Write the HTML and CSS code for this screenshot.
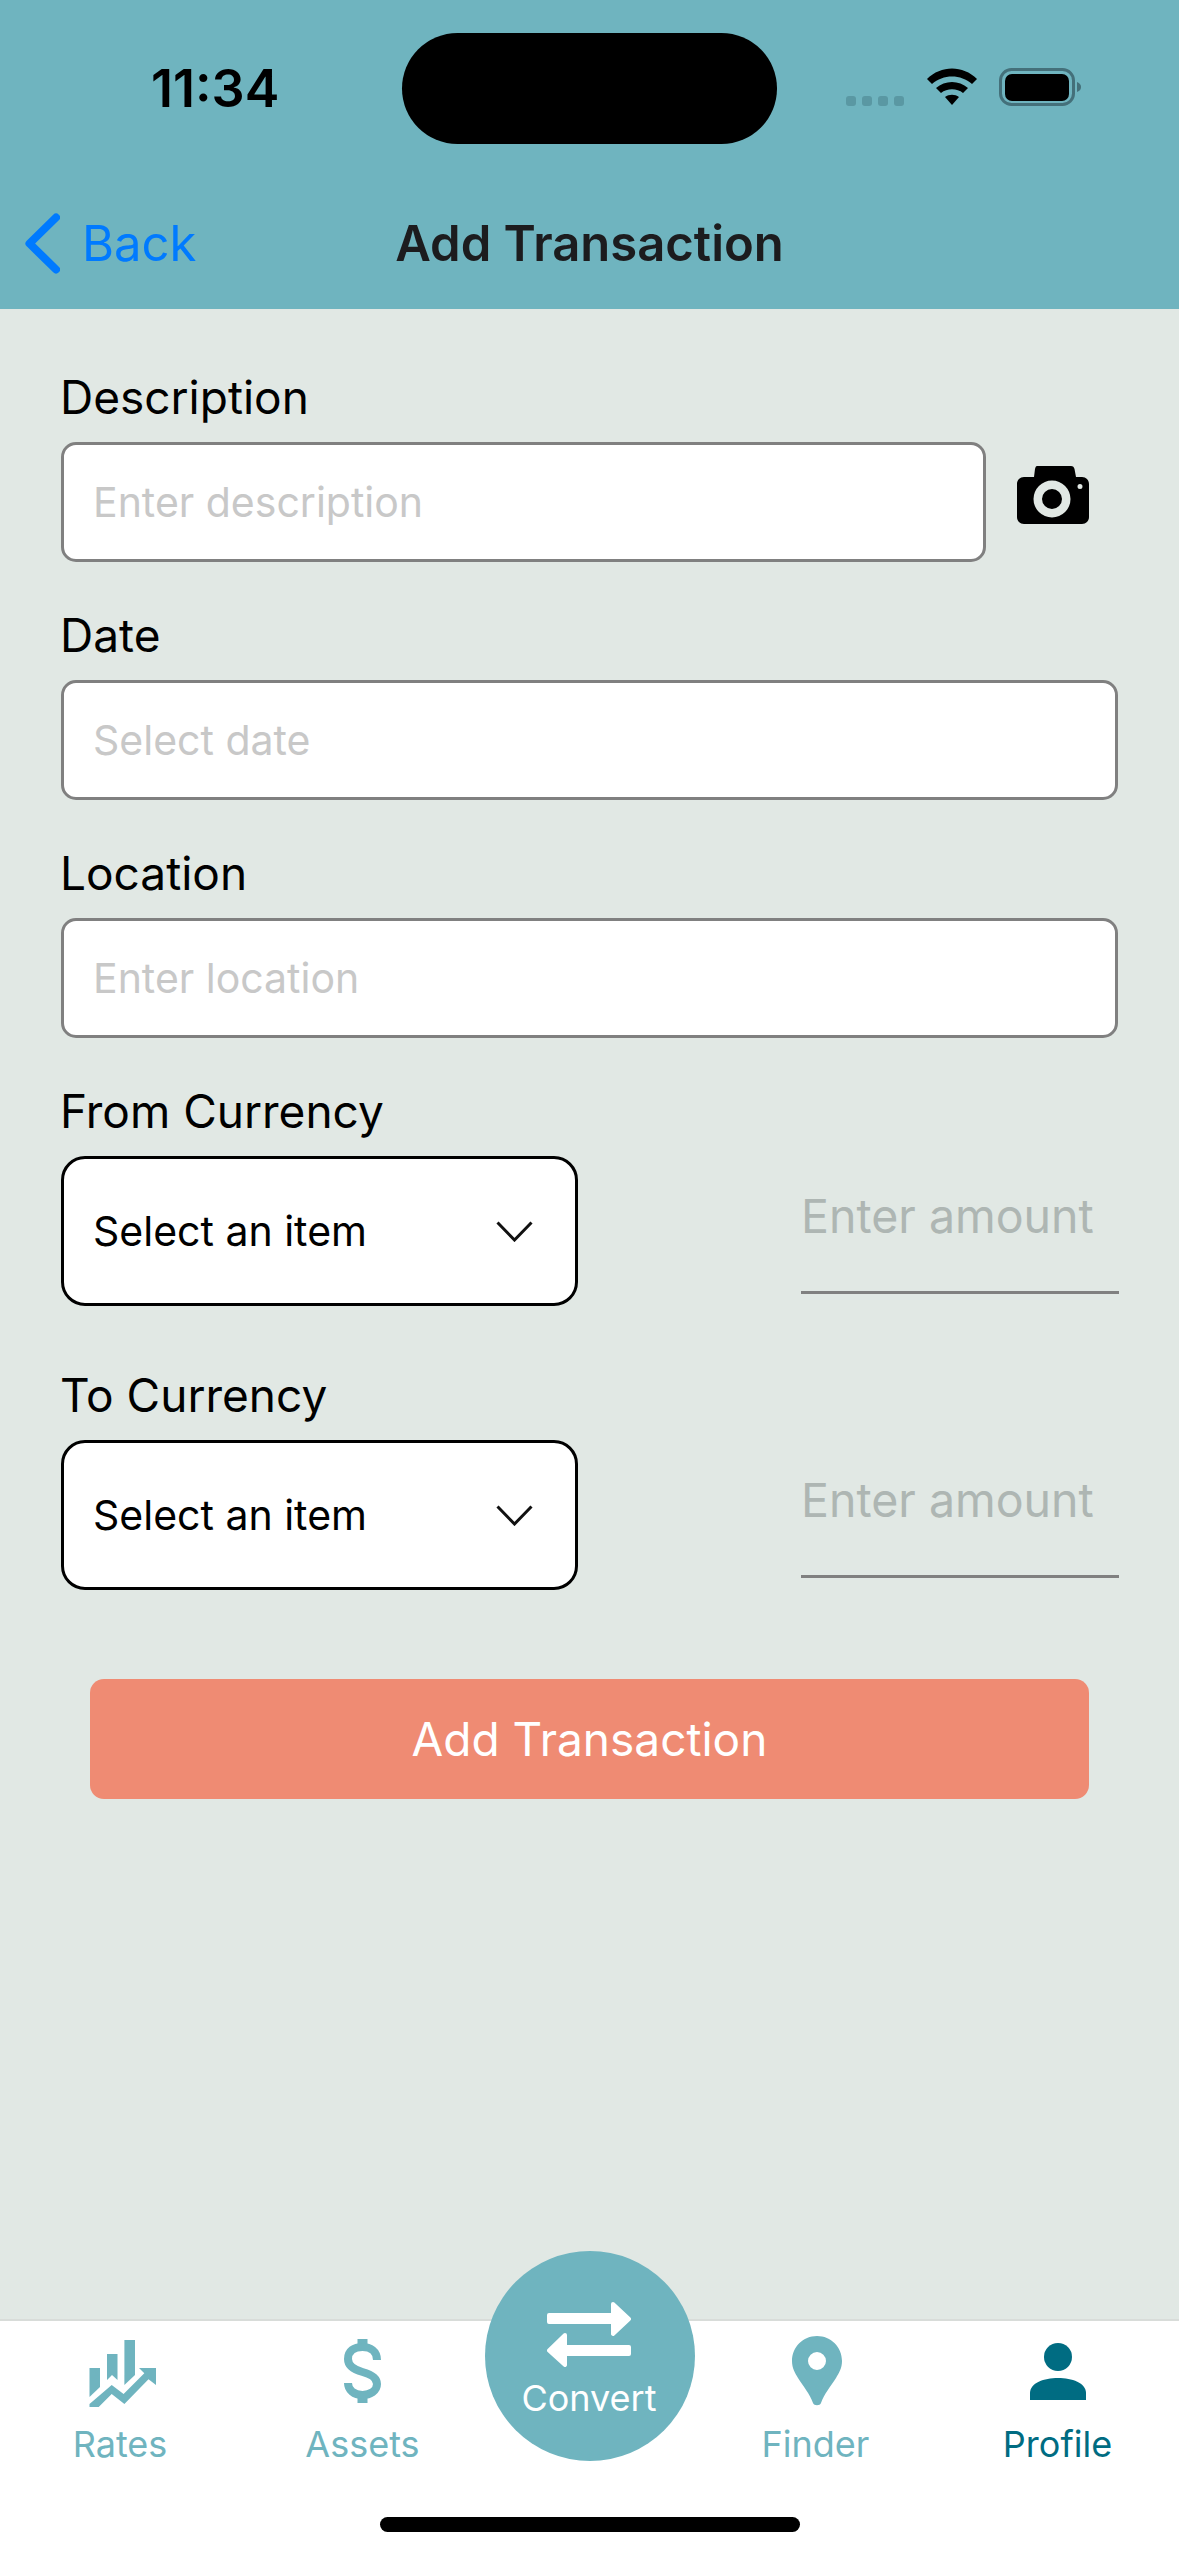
FILE: index.html
```html
<!DOCTYPE html>
<html lang="en">

<head>
    <meta charset="UTF-8">
    <meta name="viewport" content="width=device-width, initial-scale=1.0">
    <title>Add Transaction</title>
    <link rel="stylesheet" href="styles.css">
</head>

<body>
    <div class="screen">
        <header class="header">
            <div class="status">
                <span class="time">11:34</span>
                <div class="island"></div>
                <svg class="status-icons" width="235" height="38" viewBox="0 0 235 38">
                    <g fill="#5a98a3">
                        <rect x="0" y="28" width="10" height="10" rx="3"/>
                        <rect x="16" y="28" width="10" height="10" rx="3"/>
                        <rect x="32" y="28" width="10" height="10" rx="3"/>
                        <rect x="48" y="28" width="10" height="10" rx="3"/>
                    </g>
                    <path d="M81 11 C95 -3 117 -3 131 11 L126 16 C115 6 97 6 86 16 Z M90 20 C99 12 113 12 122 20 L117 25 C111 20 101 20 95 25 Z M99 29 C103 26 109 26 113 29 L106 37 Z"/>
                    <rect x="154.500" y="1.500" width="73" height="35" rx="11" fill="none" stroke="#44707a" stroke-width="3"/>
                    <rect x="159" y="6" width="64" height="27" rx="7"/>
                    <path d="M231 14 C234 15 235 17 235 19 C235 21 234 23 231 24 Z" fill="#44707a"/>
                </svg>
            </div>
            <nav class="nav">
                <a class="back">
                    <svg width="35" height="61" viewBox="0 0 35 61">
                        <path d="M31 4.500 L4.500 30.500 L31 56.500" fill="none" stroke="#007aff" stroke-width="8" stroke-linecap="round" stroke-linejoin="round"/>
                    </svg>
                    <span>Back</span>
                </a>
                <h1 class="title">Add Transaction</h1>
            </nav>
        </header>

        <main class="form">
            <label class="label">Description</label>
            <div class="desc-row">
                <input class="input" type="text" placeholder="Enter description">
                <svg class="camera" width="72" height="58" viewBox="0 0 72 58">
                    <path fill-rule="evenodd" d="M20 0 H54 C56 0 57 1 57.500 3 L59 11 H65 C69 11 72 14 72 18 V51 C72 55 69 58 65 58 H7 C3 58 0 55 0 51 V18 C0 14 3 11 7 11 H17 L18 3 C18.500 1 19 0 20 0 Z M35 14.500 A18.500 18.500 0 1 0 35 51.500 A18.500 18.500 0 1 0 35 14.500 Z M35 23 A10 10 0 1 1 35 43 A10 10 0 1 1 35 23 Z M63 18 A2.500 2.500 0 1 0 63 23 A2.500 2.500 0 1 0 63 18 Z"/>
                </svg>
            </div>

            <label class="label">Date</label>
            <input class="input" type="text" placeholder="Select date">

            <label class="label">Location</label>
            <input class="input" type="text" placeholder="Enter location">

            <label class="label">From Currency</label>
            <div class="currency-row">
                <div class="select">
                    <span>Select an item</span>
                    <svg width="37" height="21" viewBox="0 0 37 21">
                        <path d="M1.500 1.500 L18.500 19 L35.500 1.500" fill="none" stroke="#111" stroke-width="3"/>
                    </svg>
                </div>
                <input class="amount" type="text" placeholder="Enter amount">
            </div>

            <label class="label">To Currency</label>
            <div class="currency-row">
                <div class="select">
                    <span>Select an item</span>
                    <svg width="37" height="21" viewBox="0 0 37 21">
                        <path d="M1.500 1.500 L18.500 19 L35.500 1.500" fill="none" stroke="#111" stroke-width="3"/>
                    </svg>
                </div>
                <input class="amount" type="text" placeholder="Enter amount">
            </div>

            <button class="submit">Add Transaction</button>
        </main>

        <footer class="tabbar">
            <div class="tabs">
                <div class="tab">
                    <svg width="80" height="80" viewBox="0 0 80 80" fill="#6fb4bf">
                        <path d="M9.500 37 H20 V56 L9.500 66 Z"/>
                        <path d="M27 23 H37.500 V49 L32 44 L27 49 Z"/>
                        <path d="M44.400 9 H55 V44 L44.400 54 Z"/>
                        <path d="M9.500 73 L31.700 54 L43.600 63 L64.300 42.300 L59 37 H76 V54 L68.500 48.300 L44.400 73 L31.700 63 L18.700 76 H9.500 Z"/>
                    </svg>
                    <span>Rates</span>
                </div>
                <div class="tab">
                    <svg width="80" height="80" viewBox="0 0 80 80" fill="#6fb4bf">
                        <rect x="34.500" y="8" width="10" height="10"/>
                        <rect x="34.500" y="62" width="10" height="10"/>
                        <path d="M54 29 C54 20 47 16 39.500 16 C31 16 25 20 25 28 C25 36 32 39 39.500 41 C47 43 54 46 54 53 C54 60 47 64 39.500 64 C31 64 25 59 25 52" fill="none" stroke="#6fb4bf" stroke-width="8"/>
                    </svg>
                    <span>Assets</span>
                </div>
                <div class="tab tab-convert">
                    <svg width="84" height="65" viewBox="0 0 84 65" fill="#fff" stroke="#fff" stroke-width="4" stroke-linejoin="round">
                        <path d="M2 13 H66 V2 L82 17 L66 32 V20 H2 Z"/>
                        <path d="M82 45 H18 V33 L2 48.500 L18 63 V52 H82 Z"/>
                    </svg>
                    <span>Convert</span>
                </div>
                <div class="tab">
                    <svg width="80" height="80" viewBox="0 0 80 80" fill="#6fb4bf">
                        <path fill-rule="evenodd" d="M41 5 C55 5 66 16 66 30 C66 37 63 42 60 47 C55 55 48 63 45 72 C44 75 38 75 37 72 C34 63 27 55 22 47 C19 42 16 37 16 30 C16 16 27 5 41 5 Z M41 21 A9 9 0 1 0 41 39 A9 9 0 1 0 41 21 Z"/>
                    </svg>
                    <span>Finder</span>
                </div>
                <div class="tab tab-active">
                    <svg width="80" height="80" viewBox="0 0 80 80" fill="#006c82">
                        <ellipse cx="40" cy="26" rx="14" ry="14"/>
                        <path d="M12 69 V62 C12 52 26 47 40 47 C54 47 68 52 68 62 V69 Z"/>
                    </svg>
                    <span>Profile</span>
                </div>
            </div>
            <div class="home-bar"></div>
        </footer>
    </div>
</body>

</html>
```

FILE: styles.css
```css
*{
    box-sizing: border-box;
}
body{
    margin: 0;
    background-color: #e1e8e4;
    font-family: Inter, "Liberation Sans", sans-serif;
}
.screen{
    width: 1179px;
    height: 2556px;
    display: flex;
    flex-direction: column;
    overflow: hidden;
}
.header{
    height: 309px;
    background-color: #6fb4bf;
}
.status{
    display: flex;
    padding: 33px 0 0 151px;
}
.time{
    width: 251px;
    height: 111px;
    line-height: 111px;
    font-size: 52px;
    font-weight: 600;
    color: #000;
}
.island{
    width: 375px;
    height: 111px;
    border-radius: 56px;
    background-color: #000;
}
.status-icons{
    margin: 35px 0 0 69px;
}
.nav{
    display: grid;
    grid-template-columns: 1fr auto 1fr;
    align-items: center;
    height: 165px;
    padding-top: 33px;
}
.back{
    display: flex;
    align-items: center;
    gap: 22px;
    padding-left: 25px;
    color: #007aff;
    font-size: 49px;
}
.title{
    margin: 0;
    font-size: 49px;
    font-weight: 600;
    color: #1c1c1e;
}
.form{
    flex: 1;
    display: flex;
    flex-direction: column;
    padding: 70px 61px 0;
}
.label{
    height: 63px;
    margin-left: -1px;
    font-size: 46px;
    line-height: 36px;
    color: #000;
}
.input{
    flex: none;
    width: 100%;
    height: 120px;
    margin-bottom: 55px;
    padding: 0 29px;
    border: 3px solid #808080;
    border-radius: 15px;
    background-color: #fff;
    font-family: inherit;
    font-size: 41px;
}
.input::placeholder{
    color: #c8c8c8;
    opacity: 1;
}
.desc-row{
    display: flex;
    gap: 31px;
}
.desc-row .input{
    width: 925px;
}
.camera{
    margin-top: 24px;
}
.currency-row{
    display: flex;
    justify-content: space-between;
    align-items: flex-start;
    height: 150px;
    margin-bottom: 71px;
}
.select{
    display: flex;
    justify-content: space-between;
    align-items: center;
    width: 517px;
    height: 150px;
    padding: 0 42px 0 29px;
    border: 3px solid #000;
    border-radius: 24px;
    background-color: #fff;
    font-size: 41px;
    color: #000;
}
.amount{
    width: 318px;
    height: 138px;
    margin-right: -1px;
    padding: 0 0 16px;
    border: none;
    border-bottom: 3px solid #808080;
    background: none;
    font-family: inherit;
    font-size: 46.500px;
}
.amount::placeholder{
    color: #aeb6b3;
    opacity: 1;
}
.submit{
    flex: none;
    height: 120px;
    margin: 18px 29px 0;
    border: none;
    border-radius: 14px;
    background-color: #ef8b73;
    color: #fff;
    font-family: inherit;
    font-size: 46px;
}
.tabbar{
    height: 237px;
    border-top: 2px solid #d8dcd9;
    background-color: #fff;
}
.tabs{
    display: grid;
    grid-template-columns: 240px 245px 210px 241px 243px;
    height: 196px;
}
.tab{
    display: flex;
    flex-direction: column;
    align-items: center;
    padding-top: 10px;
    color: #6fb4bf;
    font-size: 36px;
    line-height: 44px;
}
.tab span{
    margin-top: 11px;
}
.tab-active{
    color: #006c82;
}
.tab-convert{
    height: 210px;
    margin-top: -70px;
    padding: 51px 2px 0 0;
    border-radius: 50%;
    background-color: #6fb4bf;
    color: #fff;
}
.tab-convert span{
    margin-top: 9px;
}
.home-bar{
    width: 420px;
    height: 15px;
    margin: 0 auto;
    border-radius: 8px;
    background-color: #000;
}
```
